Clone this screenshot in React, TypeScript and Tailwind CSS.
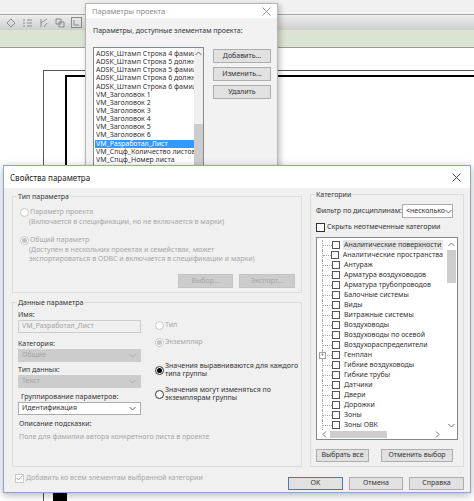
import React from "react";

const backItems = [
  "ADSK_Штамп Строка 4 фамилия",
  "ADSK_Штамп Строка 5 должность",
  "ADSK_Штамп Строка 5 фамилия",
  "ADSK_Штамп Строка 6 должность",
  "ADSK_Штамп Строка 6 фамилия",
  "VM_Заголовок 1",
  "VM_Заголовок 2",
  "VM_Заголовок 3",
  "VM_Заголовок 4",
  "VM_Заголовок 5",
  "VM_Заголовок 6",
  "VM_Разработал_Лист",
  "VM_Спцф_Количество листов",
  "VM_Спцф_Номер листа",
];

const categories = [
  "Аналитические поверхности",
  "Аналитические пространства",
  "Антураж",
  "Арматура воздуховодов",
  "Арматура трубопроводов",
  "Балочные системы",
  "Виды",
  "Витражные системы",
  "Воздуховоды",
  "Воздуховоды по осевой",
  "Воздухораспределители",
  "Генплан",
  "Гибкие воздуховоды",
  "Гибкие трубы",
  "Датчики",
  "Двери",
  "Дорожки",
  "Зоны",
  "Зоны ОВК",
];

function Chevron({ className = "" }: { className?: string }) {
  return (
    <svg width="7" height="5" viewBox="0 0 7 5" className={className}>
      <path d="M0.5 1 L3.5 4 L6.5 1" fill="none" stroke="currentColor" strokeWidth="0.9" />
    </svg>
  );
}

function CloseX({ className = "" }: { className?: string }) {
  return (
    <svg width="9" height="9" viewBox="0 0 9 9" className={className}>
      <path d="M0.5 0.5 L8.5 8.5 M8.5 0.5 L0.5 8.5" stroke="currentColor" strokeWidth="0.9" />
    </svg>
  );
}

function Radio({ checked = false, disabled = false }: { checked?: boolean; disabled?: boolean }) {
  return (
    <span
      className={`flex h-[9px] w-[9px] shrink-0 items-center justify-center rounded-full border bg-white ${
        disabled ? "border-[#c8c8c8]" : "border-[#333]"
      }`}
    >
      {checked && <span className={`h-[5px] w-[5px] rounded-full ${disabled ? "bg-[#c4c4c4]" : "bg-black"}`} />}
    </span>
  );
}

function Btn({
  children,
  className = "",
  disabled = false,
  primary = false,
}: {
  children: React.ReactNode;
  className?: string;
  disabled?: boolean;
  primary?: boolean;
}) {
  const look = disabled
    ? "border-[#c4c4c4] bg-[#cccccc] text-[#a6a6a6]"
    : primary
    ? "border-[#3d7ebf] bg-[#e1e1e1] text-[#333]"
    : "border-[#adadad] bg-[#e1e1e1] text-[#333]";
  return (
    <div className={`flex items-center justify-center whitespace-nowrap border ${look} ${className}`}>{children}</div>
  );
}

function Group({ label, className = "", children }: { label: string; className?: string; children: React.ReactNode }) {
  return (
    <div className={`relative border border-[#dcdcdc] ${className}`}>
      <span className="absolute left-[4px] top-[-5px] bg-[#f0f0f0] px-[1px] leading-[10px] text-[#333]">{label}</span>
      {children}
    </div>
  );
}

function Combo({ value, disabled = false }: { value: string; disabled?: boolean }) {
  return (
    <div
      className={`flex h-[13px] w-[123px] items-center justify-between border pl-[3px] pr-[4px] ${
        disabled ? "border-[#cccccc] bg-[#cccccc] text-[#a3a3a3]" : "border-[#adadad] bg-white text-[#333]"
      }`}
    >
      <span>{value}</span>
      <Chevron className={disabled ? "text-[#a8a8a8]" : "text-[#555]"} />
    </div>
  );
}

function ToolIcons() {
  return (
    <div className="flex items-center gap-[6px] pl-[6px] text-[#8a8a8a]">
      <svg width="10" height="10" viewBox="0 0 10 10">
        <path d="M5 1 L9 5 L5 9 L1 5 Z" fill="none" stroke="currentColor" />
      </svg>
      <svg width="11" height="10" viewBox="0 0 11 10">
        <path d="M1 2 H3 M5 2 H10 M1 5 H3 M5 5 H10 M1 8 H3 M5 8 H10" stroke="currentColor" />
      </svg>
      <svg width="10" height="10" viewBox="0 0 10 10">
        <path d="M2 1 V9 M2 5 L8 1 M5 9 L8 5" fill="none" stroke="currentColor" />
      </svg>
      <svg width="10" height="10" viewBox="0 0 10 10">
        <path d="M1 1 H6 V6 H1 Z M4 4 H9 V9 H4 Z" fill="none" stroke="currentColor" />
      </svg>
      <svg width="11" height="11" viewBox="0 0 11 11">
        <rect x="0.5" y="0.5" width="10" height="10" fill="none" stroke="currentColor" />
        <path d="M3 3 V8 H8" fill="none" stroke="currentColor" />
      </svg>
    </div>
  );
}

function BackDialog() {
  return (
    <div className="absolute left-[85px] top-[3px] flex h-[175px] w-[193px] flex-col border border-[#b5b5b5] bg-[#f2f2f2] shadow-[2px_2px_6px_rgba(0,0,0,0.25)]">
      <div className="flex h-[20px] items-center justify-between bg-white pl-[6px] pr-[6px] pt-[1px]">
        <span className="text-[7.5px] text-[#8a8a8a]">Параметры проекта</span>
        <CloseX className="text-[#8a8a8a]" />
      </div>
      <div className="flex flex-col pl-[7px] pt-[8px]">
        <div className="h-[9px] whitespace-nowrap leading-[9px] text-[#333]">Параметры, доступные элементам проекта:</div>
        <div className="mt-[12px] flex gap-[9px]">
          <div className="flex h-[130px] w-[111px] border border-[#828790] bg-white">
            <div className="flex flex-1 flex-col overflow-hidden pl-[1px] pt-[2px]">
              {backItems.map((t, i) => (
                <div
                  key={t}
                  className={`h-[8.15px] shrink-0 whitespace-nowrap pl-[1px] leading-[8.15px] ${
                    i === 11 ? "bg-[#3399ff] text-white" : "text-[#333]"
                  }`}
                >
                  {t}
                </div>
              ))}
            </div>
            <div className="flex w-[9px] flex-col bg-[#f0f0f0]">
              <div className="flex h-[10px] items-center justify-center text-[#555]">
                <Chevron className="rotate-180" />
              </div>
              <div className="mt-[66px] flex-1 bg-[#cdcdcd]" />
            </div>
          </div>
          <div className="mt-[2px] flex flex-col gap-[4px]">
            <Btn className="h-[14px] w-[58px]">Добавить...</Btn>
            <Btn className="h-[14px] w-[58px]">Изменить...</Btn>
            <Btn className="h-[14px] w-[58px]">Удалить</Btn>
          </div>
        </div>
      </div>
    </div>
  );
}

function TypeGroup() {
  return (
    <Group label="Тип параметра" className="h-[97px]">
      <div className="flex flex-col whitespace-nowrap pl-[7px] pt-[10px] text-[#a6a6a6]">
        <div className="flex h-[10px] items-center gap-[1px]">
          <Radio disabled />
          <span>Параметр проекта</span>
        </div>
        <div className="h-[10px] pl-[9px] leading-[10px]">(Включается в спецификации, но не включается в марки)</div>
        <div className="mt-[8px] flex h-[10px] items-center gap-[1px]">
          <Radio disabled checked />
          <span>Общий параметр</span>
        </div>
        <div className="mt-[1px] pl-[9px] leading-[8.5px]">
          (Доступен в нескольких проектах и семействах, может
          <br />
          экспортироваться в ODBC и включается в спецификации и марки)
        </div>
        <div className="mt-[11px] flex justify-end gap-[6px] pr-[6px]">
          <Btn disabled className="h-[14px] w-[55px]">
            Выбор...
          </Btn>
          <Btn disabled className="h-[14px] w-[56px]">
            Экспорт...
          </Btn>
        </div>
      </div>
    </Group>
  );
}

function DataGroup() {
  return (
    <Group label="Данные параметра" className="mt-[9px] h-[165px]">
      <div className="flex flex-col whitespace-nowrap pl-[5px] pt-[7px] text-[#333]">
        <div className="flex">
          <div className="flex w-[123px] flex-col">
            <div className="h-[10px] leading-[10px]">Имя:</div>
            <div className="flex h-[13px] items-center border border-[#cccccc] bg-[#f0f0f0] pl-[3px] text-[#a3a3a3]">
              VM_Разработал_Лист
            </div>
            <div className="mt-[6px] h-[10px] leading-[10px]">Категория:</div>
            <Combo value="Общие" disabled />
            <div className="mt-[3px] h-[10px] leading-[10px]">Тип данных:</div>
            <Combo value="Текст" disabled />
            <div className="mt-[4px] h-[10px] pl-[3px] leading-[10px]">Группирование параметров:</div>
            <Combo value="Идентификация" />
          </div>
          <div className="ml-[14px] flex flex-col pt-[10px]">
            <div className="flex h-[10px] items-center gap-[1px] text-[#a6a6a6]">
              <Radio disabled />
              <span>Тип</span>
            </div>
            <div className="mt-[7px] flex h-[10px] items-center gap-[1px] text-[#a6a6a6]">
              <Radio disabled checked />
              <span>Экземпляр</span>
            </div>
            <div className="mt-[15px] flex items-center gap-[1px]">
              <Radio checked />
              <span className="leading-[8px]">
                Значения выравниваются для каждого
                <br />
                типа группы
              </span>
            </div>
            <div className="mt-[8px] flex items-center gap-[1px]">
              <Radio />
              <span className="leading-[8px]">
                Значения могут изменяться по
                <br />
                экземплярам группы
              </span>
            </div>
          </div>
        </div>
        <div className="mt-[4px] h-[10px] pl-[1px] leading-[10px]">Описание подсказки:</div>
        <div className="mt-[3px] h-[10px] pl-[1px] leading-[10px] text-[#a6a6a6]">
          Поле для фамилии автора конкретного листа в проекте
        </div>
      </div>
    </Group>
  );
}

function CategoryGroup() {
  return (
    <Group label="Категории" className="h-[273px] w-[154px]">
      <div className="flex flex-col whitespace-nowrap pl-[5px] pt-[9px] text-[#333]">
        <div className="flex h-[14px] items-center justify-between pr-[10px]">
          <span>Фильтр по дисциплинам:</span>
          <div className="flex h-[14px] w-[51px] items-center justify-between overflow-hidden border border-[#adadad] bg-white pl-[3px] pr-[3px]">
            <span>&lt;несколько</span>
            <Chevron className="shrink-0 text-[#555]" />
          </div>
        </div>
        <div className="mt-[4px] flex h-[10px] items-center gap-[2px]">
          <span className="h-[9px] w-[9px] border border-[#333] bg-white" />
          <span>Скрыть неотмеченные категории</span>
        </div>
        <div className="mt-[5px] flex h-[203px] w-[142px] flex-col border border-[#828790] bg-white">
          <div className="flex flex-1 overflow-hidden">
            <div className="flex flex-1 flex-col overflow-hidden pt-[2px]">
              {categories.map((c, i) => (
                <div key={c} className="flex h-[10px] shrink-0 items-center whitespace-nowrap">
                  <span className="relative ml-[5px] flex h-full w-[10px] items-center border-l border-dotted border-[#a8a8a8]">
                    <span className="w-full border-t border-dotted border-[#a8a8a8]" />
                    {c === "Генплан" && (
                      <span className="absolute left-[-4px] top-[1.5px] flex h-[7px] w-[7px] items-center justify-center border border-[#a0a0a0] bg-white text-[6px] leading-none text-[#555]">
                        +
                      </span>
                    )}
                  </span>
                  <span className="h-[8px] w-[8px] shrink-0 border border-[#555] bg-white" />
                  <span className={`ml-[3px] pl-[1px] pr-[2px] leading-[10px] ${i === 0 ? "bg-[#e6e6e6]" : ""}`}>{c}</span>
                </div>
              ))}
            </div>
            <div className="flex w-[12px] shrink-0 flex-col items-center bg-white">
              <div className="flex h-[12px] items-center text-[#666]">
                <Chevron className="rotate-180" />
              </div>
              <div className="h-[33px] w-[9px] bg-[#cdcdcd]" />
              <div className="flex-1" />
              <div className="flex h-[10px] items-center text-[#666]">
                <Chevron />
              </div>
            </div>
          </div>
          <div className="flex h-[9px] items-center bg-white pl-[4px]">
            <Chevron className="rotate-90 text-[#666]" />
            <div className="ml-[2px] h-[7px] w-[57px] bg-[#cdcdcd]" />
            <div className="flex-1" />
            <Chevron className="mr-[16px] -rotate-90 text-[#666]" />
          </div>
        </div>
        <div className="mt-[9px] flex gap-[12px]">
          <Btn className="h-[13px] w-[53px]">Выбрать все</Btn>
          <Btn className="h-[13px] w-[72px]">Отменить выбор</Btn>
        </div>
      </div>
    </Group>
  );
}

function FrontDialog() {
  return (
    <div className="absolute left-[3px] top-[165px] flex h-[328px] w-[468px] flex-col border border-[#8ea6c8] bg-[#f0f0f0] shadow-[0_2px_8px_rgba(0,0,0,0.3)]">
      <div className="flex h-[22px] shrink-0 items-center justify-between bg-white pl-[6px] pr-[9px] pt-[1px]">
        <span className="text-[8px] text-[#222]">Свойства параметра</span>
        <CloseX className="text-[#333]" />
      </div>
      <div className="flex gap-[8px] pl-[8px] pt-[8px]">
        <div className="flex w-[290px] flex-col">
          <TypeGroup />
          <DataGroup />
        </div>
        <div className="-mt-[2px]">
          <CategoryGroup />
        </div>
      </div>
      <div className="mt-[5px] flex items-start pl-[11px]">
        <div className="mt-[1px] flex h-[10px] items-center gap-[2px] whitespace-nowrap text-[#a6a6a6]">
          <span className="flex h-[9px] w-[9px] items-center justify-center border border-[#c8c8c8] bg-white">
            <svg width="7" height="6" viewBox="0 0 7 6">
              <path d="M0.5 3 L2.5 5 L6.5 0.5" fill="none" stroke="#b0b0b0" strokeWidth="1" />
            </svg>
          </span>
          <span>Добавить ко всем элементам выбранной категории</span>
        </div>
        <div className="ml-auto mr-[6px] mt-[5px] flex gap-[6px]">
          <Btn primary className="h-[13px] w-[55px]">
            OK
          </Btn>
          <Btn className="h-[13px] w-[54px]">Отмена</Btn>
          <Btn className="h-[13px] w-[55px]">Справка</Btn>
        </div>
      </div>
    </div>
  );
}

export default function App() {
  return (
    <div className="relative h-[501px] w-[474px] overflow-hidden bg-white font-['Noto_Sans',sans-serif] text-[7px]">
      <div className="h-[15px] border-b border-[#a8a8a8] bg-[#f1f1f1]" />
      <div className="flex h-[15px] items-center bg-gradient-to-b from-[#ededed] to-[#cfcfcf]">
        <ToolIcons />
      </div>
      <div className="h-[18px] border-b border-[#9a9a9a] bg-[#dbe4d3]" />

      {/* drawing sheet lines */}
      <div className="absolute bottom-0 left-[43px] right-0 top-[70px] border-l border-t border-[#555]" />
      <div className="absolute bottom-0 left-[65px] right-0 top-[75px] border-l-2 border-t-2 border-black" />
      <div className="absolute left-[53px] top-[493px] h-[8px] w-[13px] bg-black" />

      <BackDialog />
      <FrontDialog />
    </div>
  );
}
